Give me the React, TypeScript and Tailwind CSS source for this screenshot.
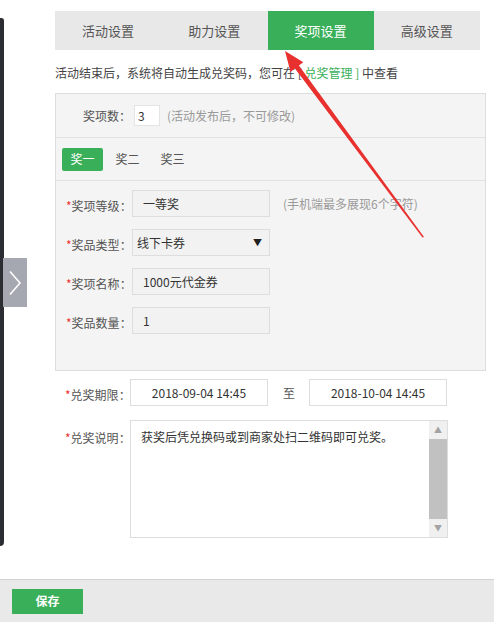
import { useState } from 'react';

const tabs = ['活动设置', '助力设置', '奖项设置', '高级设置'];
const prizes = ['奖一', '奖二', '奖三'];

function Label({ text, required = true }: { text: string; required?: boolean }) {
  return (
    <span className="text-[12px] text-[#555] whitespace-nowrap">
      {required && <span className="text-[#e33]">*</span>}
      {text}：
    </span>
  );
}

function Field({ label, children }: { label: string; children: React.ReactNode }) {
  return (
    <div className="flex items-center">
      <div className="w-[76px] pl-[10px]">
        <Label text={label} />
      </div>
      {children}
    </div>
  );
}

function Box({ value, className = '' }: { value: string; className?: string }) {
  return (
    <div
      className={`h-[27px] w-[138px] border border-[#ddd] bg-[#f2f2f2] flex items-center px-[10px] text-[12px] text-[#333] ${className}`}
    >
      {value}
    </div>
  );
}

export default function App() {
  const [activeTab, setActiveTab] = useState(2);
  const [activePrize, setActivePrize] = useState(0);

  return (
    <div
      className="relative w-[501px] h-[627px] bg-white overflow-hidden text-[#333]"
      style={{ fontFamily: '"Noto Sans CJK SC", "Noto Sans", sans-serif' }}
    >
      {/* phone frame edge */}
      <div className="absolute left-0 top-[18px] w-[4px] h-[528px] bg-[#2b2d33] rounded-br-[6px] rounded-tr-[4px]" />
      {/* side toggle */}
      <div className="absolute left-[3px] top-[258px] w-[24px] h-[49px] bg-[#a5a8b0] flex items-center justify-center">
        <svg width="14" height="26" viewBox="0 0 14 26" fill="none">
          <path d="M2 1.5 L12 13 L2 24.5" stroke="#fff" strokeWidth="1.6" />
        </svg>
      </div>

      <div className="pl-[55px] pt-[11px] pr-[15px]">
        <div className="flex w-[425px] h-[39px] bg-[#e8e8e8]">
          {tabs.map((t, i) => (
            <button
              key={t}
              onClick={() => setActiveTab(i)}
              className={`flex-1 text-[13px] leading-none ${
                i === activeTab ? 'bg-[#3aaf5a] text-white' : 'text-[#555]'
              }`}
            >
              {t}
            </button>
          ))}
        </div>

        <p className="mt-[14px] text-[12px] leading-[18px] text-[#444] whitespace-nowrap">
          活动结束后，系统将自动生成兑奖码，您可在 [ <span className="text-[#3aaf5a]">兑奖管理 ]</span> 中查看
        </p>

        <div className="mt-[11px] w-[431px] border border-[#ddd] bg-[#f4f4f4]">
          <div className="flex items-center h-[43px] pl-[27px]">
            <span className="text-[12px] text-[#555]">奖项数：</span>
            <div className="ml-[3px] h-[21px] w-[26px] bg-white border border-[#e4e4e4] flex items-center pl-[3px] text-[12px]">
              3
            </div>
            <span className="ml-[7px] text-[12px] text-[#999]">(活动发布后，不可修改)</span>
          </div>

          <div className="border-t border-[#e2e2e2] h-[43px] flex items-center pl-[6px] gap-[4px]">
            {prizes.map((p, i) => (
              <button
                key={p}
                onClick={() => setActivePrize(i)}
                className={`h-[23px] w-[41px] rounded-[2px] text-[12px] ${
                  i === activePrize ? 'bg-[#3aaf5a] text-white' : 'text-[#555]'
                }`}
              >
                {p}
              </button>
            ))}
          </div>

          <div className="border-t border-[#e2e2e2] pt-[9px] pb-[36px] flex flex-col gap-[12px]">
            <Field label="奖项等级">
              <Box value="一等奖" />
              <span className="ml-[13px] text-[12px] text-[#999]">(手机端最多展现6个字符)</span>
            </Field>
            <Field label="奖品类型">
              <div className="h-[27px] w-[138px] border border-[#ddd] bg-[#f2f2f2] flex items-center justify-between pl-[4px] pr-[7px] text-[12px]">
                <span>线下卡券</span>
                <span className="text-[9px] text-[#222]">▼</span>
              </div>
            </Field>
            <Field label="奖项名称">
              <Box value="1000元代金券" />
            </Field>
            <Field label="奖品数量">
              <Box value="1" />
            </Field>
          </div>
        </div>

        <div className="mt-[8px] flex items-center">
          <div className="w-[75px] pl-[10px]">
            <Label text="兑奖期限" />
          </div>
          <div className="h-[27px] w-[138px] border border-[#ddd] flex items-center justify-center text-[12px]">
            2018-09-04 14:45
          </div>
          <span className="ml-[15px] text-[12px] text-[#555]">至</span>
          <div className="ml-[14px] h-[27px] w-[138px] border border-[#ddd] flex items-center justify-center text-[12px]">
            2018-10-04 14:45
          </div>
        </div>

        <div className="mt-[14px] flex items-start">
          <div className="w-[75px] pl-[10px] pt-[4px]">
            <Label text="兑奖说明" />
          </div>
          <div className="h-[118px] w-[318px] border border-[#ddd] flex">
            <div className="flex-1 px-[10px] pt-[7px] text-[12px] leading-[18px]">
              获奖后凭兑换码或到商家处扫二维码即可兑奖。
            </div>
            <div className="w-[18px] bg-[#f0f0f0] flex flex-col items-center">
              <span className="h-[18px] flex items-center text-[8px] text-[#a3a3a3]">▲</span>
              <div className="w-full flex-1 bg-[#c1c1c1] mb-[20px]" />
              <span className="h-[18px] -mt-[20px] flex items-center text-[8px] text-[#a3a3a3]">▼</span>
            </div>
          </div>
        </div>
      </div>

      {/* footer bar */}
      <div className="absolute left-0 top-[579px] w-[494px] h-[43px] bg-[#e9e9e9] border-t border-[#d2d2d2] flex items-center pl-[12px]">
        <button className="h-[25px] w-[71px] bg-[#3aaf5a] text-white text-[12px] font-bold">保存</button>
      </div>

      {/* callout arrow */}
      <svg className="absolute left-0 top-0 pointer-events-none" width="501" height="627">
        <polygon
          points="285,51 303.3,62.3 298.9,65.6 424,237 422.5,237.5 294.9,68.6 290.5,71.9"
          fill="#e8302e"
        />
      </svg>
    </div>
  );
}
